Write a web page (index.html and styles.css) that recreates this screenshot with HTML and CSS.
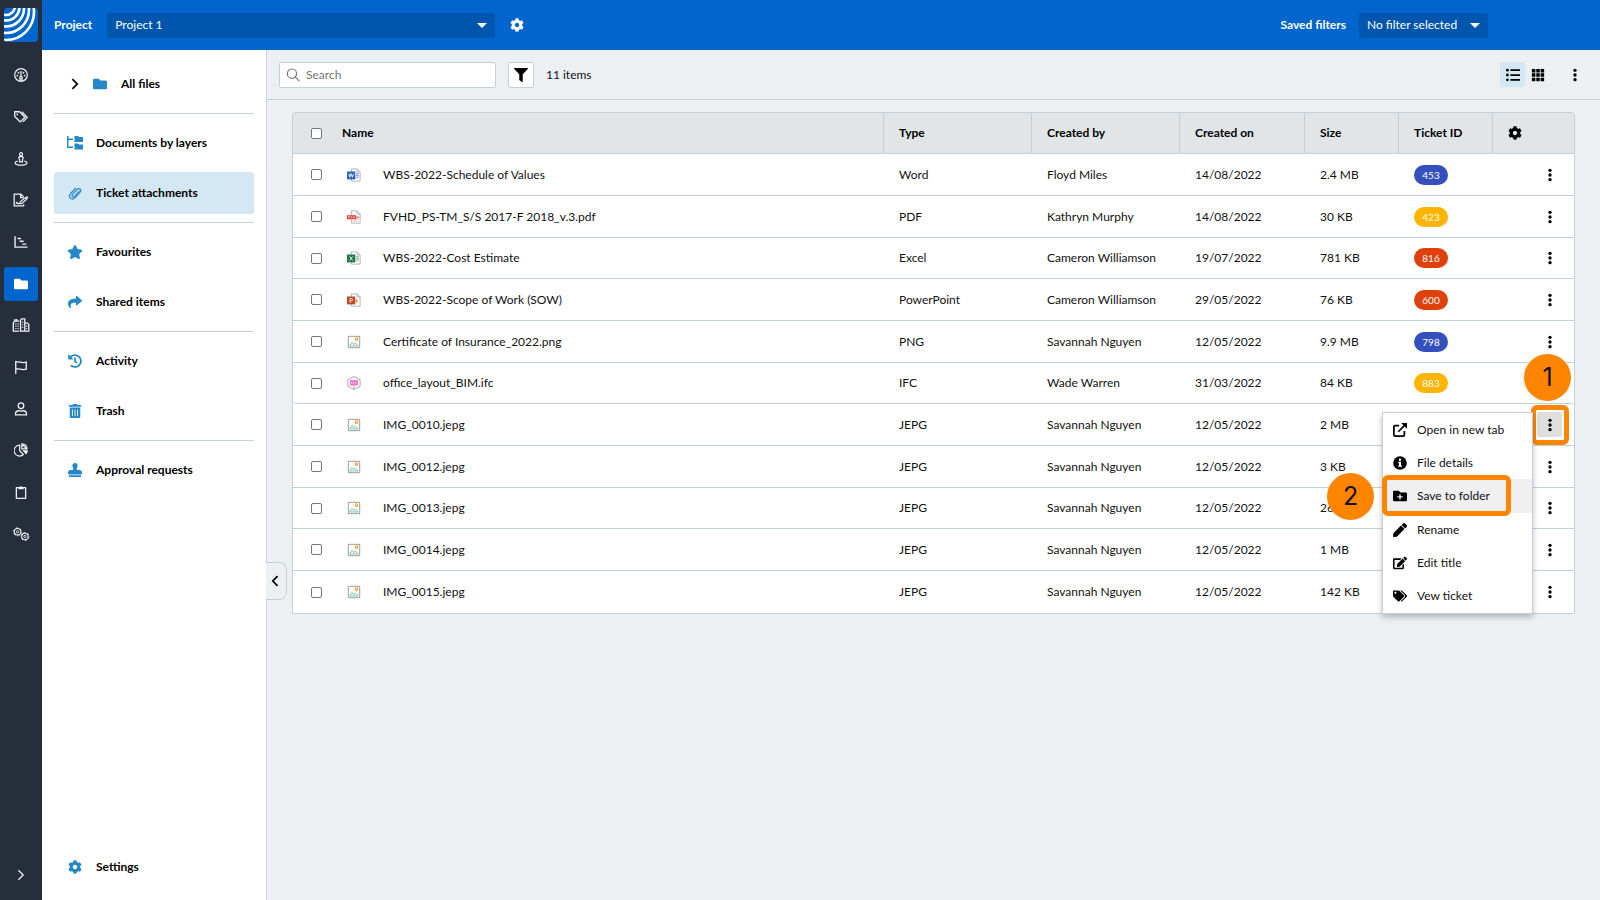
FILE: index.html
```html
<!DOCTYPE html>
<html lang="en">
<head>
    <meta charset="UTF-8">
    <meta name="viewport" content="width=device-width, initial-scale=1.0">
    <title>Ticket attachments</title>
    <link rel="stylesheet" href="styles.css">
</head>
<body>
    <svg class="sprite" aria-hidden="true">
        <symbol id="i-folder" viewBox="0 0 512 512"><path d="M464 128H272l-64-64H48C21.490 64 0 85.490 0 112v288c0 26.510 21.490 48 48 48h416c26.510 0 48-21.490 48-48V176c0-26.510-21.490-48-48-48z"/></symbol>
        <symbol id="i-folder-plus" viewBox="0 0 512 512"><path d="M464,128H272L208,64H48A48,48,0,0,0,0,112V400a48,48,0,0,0,48,48H464a48,48,0,0,0,48-48V176A48,48,0,0,0,464,128ZM359.5,296a16,16,0,0,1-16,16h-64v64a16,16,0,0,1-16,16h-16a16,16,0,0,1-16-16V312h-64a16,16,0,0,1-16-16V280a16,16,0,0,1,16-16h64V200a16,16,0,0,1,16-16h16a16,16,0,0,1,16,16v64h64a16,16,0,0,1,16,16Z"/></symbol>
        <symbol id="i-star" viewBox="0 0 576 512"><path d="M259.3 17.8L194 150.2 47.9 171.5c-26.2 3.8-36.7 36.1-17.7 54.6l105.7 103-25 145.5c-4.5 26.3 23.2 46 46.4 33.7L288 439.6l130.7 68.7c23.2 12.2 50.9-7.4 46.4-33.7l-25-145.5 105.7-103c19-18.5 8.5-50.8-17.700-54.6L382 150.2 316.700 17.8c-11.7-23.6-45.6-23.9-57.4 0z"/></symbol>
        <symbol id="i-share" viewBox="0 0 512 512"><path d="M503.691 189.836L327.687 37.851C312.281 24.546 288 35.347 288 56.015v80.053C127.371 137.907 0 170.1 0 322.326c0 61.441 39.581 122.309 83.333 154.132 13.653 9.931 33.111-2.533 28.077-18.631C66.066 312.814 132.917 274.316 288 272.085V360c0 20.7 24.3 31.453 39.687 18.164l176.004-152c11.071-9.562 11.086-26.753 0-36.328z"/></symbol>
        <symbol id="i-history" viewBox="0 0 512 512"><path d="M504 255.531c.253 136.64-111.18 248.372-247.82 248.468-59.015.042-113.223-20.53-155.822-54.911-11.077-8.94-11.905-25.541-1.839-35.607l11.267-11.267c8.609-8.609 22.353-9.551 31.891-1.984C173.062 425.135 212.781 440 256 440c101.705 0 184-82.311 184-184 0-101.705-82.311-184-184-184-48.814 0-93.149 18.969-126.068 49.932l50.754 50.754c10.08 10.08 2.941 27.314-11.313 27.314H24c-8.837 0-16-7.163-16-16V38.627c0-14.254 17.234-21.393 27.314-11.314l49.372 49.372C129.209 34.136 189.552 8 256 8c136.81 0 247.747 110.78 248 247.531zm-180.912 78.784l9.823-12.63c8.138-10.463 6.253-25.542-4.21-33.679L288 256.349V152c0-13.255-10.745-24-24-24h-16c-13.255 0-24 10.745-24 24v135.651l65.409 50.874c10.463 8.137 25.541 6.253 33.679-4.21z"/></symbol>
        <symbol id="i-trash" viewBox="0 0 448 512"><path d="M32 464a48 48 0 0 0 48 48h288a48 48 0 0 0 48-48V128H32zm272-256a16 16 0 0 1 32 0v224a16 16 0 0 1-32 0zm-96 0a16 16 0 0 1 32 0v224a16 16 0 0 1-32 0zm-96 0a16 16 0 0 1 32 0v224a16 16 0 0 1-32 0zM432 32H312l-9.400-18.700A24 24 0 0 0 281.100 0H166.800a23.720 23.720 0 0 0-21.400 13.300L136 32H16A16 16 0 0 0 0 48v32a16 16 0 0 0 16 16h416a16 16 0 0 0 16-16V48a16 16 0 0 0-16-16z"/></symbol>
        <symbol id="i-stamp" viewBox="0 0 512 512"><path d="M32 512h448v-64H32v64zm384-256h-66.560c-16.260 0-29.440-13.180-29.440-29.440v-9.460c0-27.370 8.880-53.410 21.460-77.720 9.110-17.610 12.900-38.390 9.050-60.420-6.770-38.780-38.470-70.700-77.260-77.450C212.620-9.040 160 37.330 160 96c0 14.160 3.120 27.540 8.690 39.580C182.020 164.430 192 194.700 192 226.490v.07c0 16.260-13.180 29.440-29.440 29.440H96c-53.020 0-96 42.980-96 96v32c0 17.670 14.330 32 32 32h448c17.670 0 32-14.330 32-32v-32c0-53.020-42.980-96-96-96z"/></symbol>
        <symbol id="i-cog" viewBox="0 0 512 512"><path d="M487.4 315.7l-42.6-24.6c4.3-23.2 4.3-47 0-70.2l42.6-24.6c4.9-2.8 7.1-8.6 5.5-14-11.1-35.6-30-67.8-54.7-94.6-3.8-4.1-10-5.1-14.8-2.3L380.8 110c-17.9-15.4-38.5-27.3-60.8-35.1V25.8c0-5.6-3.9-10.5-9.4-11.7-36.7-8.2-74.3-7.8-109.2 0-5.5 1.2-9.4 6.1-9.4 11.7V75c-22.2 7.9-42.8 19.8-60.8 35.1L88.7 85.5c-4.9-2.8-11-1.9-14.8 2.3-24.7 26.7-43.6 58.9-54.7 94.6-1.7 5.4.6 11.2 5.5 14L67.3 221c-4.3 23.2-4.3 47 0 70.2l-42.6 24.6c-4.9 2.8-7.1 8.6-5.5 14 11.1 35.6 30 67.8 54.7 94.6 3.8 4.1 10 5.1 14.8 2.3l42.6-24.6c17.9 15.4 38.5 27.3 60.8 35.1v49.2c0 5.6 3.9 10.5 9.4 11.7 36.7 8.2 74.3 7.8 109.2 0 5.5-1.2 9.4-6.1 9.4-11.7v-49.2c22.2-7.9 42.8-19.8 60.8-35.1l42.6 24.6c4.9 2.8 11 1.9 14.8-2.3 24.7-26.7 43.6-58.9 54.7-94.6 1.5-5.5-.7-11.3-5.6-14.1zM256 336c-44.1 0-80-35.9-80-80s35.9-80 80-80 80 35.9 80 80-35.9 80-80 80z"/></symbol>
        <symbol id="i-filter" viewBox="0 0 512 512"><path d="M487.976 0H24.028C2.71 0-8.047 25.866 7.058 40.971L192 225.941V432c0 7.831 3.821 15.17 10.237 19.662l80 55.98C298.02 518.69 320 507.493 320 487.98V225.941l184.947-184.97C520.021 25.896 509.338 0 487.976 0z"/></symbol>
        <symbol id="i-pencil" viewBox="0 0 512 512"><path d="M290.74 93.24l128.02 128.02-277.99 277.99-114.14 12.6C11.35 513.54-1.56 500.62.14 485.34l12.7-114.22 277.9-277.88zm207.2-19.06l-60.11-60.11c-18.75-18.75-49.16-18.75-67.91 0l-56.55 56.55 128.02 128.02 56.55-56.55c18.75-18.76 18.75-49.16 0-67.91z"/></symbol>
        <symbol id="i-edit" viewBox="0 0 576 512"><path d="M402.6 83.2l90.2 90.2c3.8 3.8 3.8 10 0 13.8L274.4 405.6l-92.8 10.3c-12.4 1.4-22.9-9.1-21.5-21.5l10.3-92.8L388.8 83.2c3.8-3.8 10-3.8 13.8 0zm162-22.9l-48.8-48.8c-15.2-15.2-39.9-15.2-55.2 0l-35.4 35.4c-3.8 3.8-3.8 10 0 13.8l90.2 90.2c3.8 3.8 10 3.8 13.8 0l35.4-35.4c15.2-15.3 15.2-40 0-55.2zM384 346.2V448H64V128h229.800c3.200 0 6.200-1.300 8.500-3.500l40-40c7.600-7.600 2.200-20.500-8.500-20.500H48C21.500 64 0 85.500 0 112v352c0 26.500 21.500 48 48 48h352c26.500 0 48-21.500 48-48V306.200c0-10.700-12.900-16-20.500-8.500l-40 40c-2.200 2.300-3.500 5.300-3.500 8.500z"/></symbol>
        <symbol id="i-tags" viewBox="0 0 640 512"><path d="M497.941 225.941L286.059 14.059A48 48 0 0 0 252.118 0H48C21.490 0 0 21.490 0 48v204.118a48 48 0 0 0 14.059 33.941l211.882 211.882c18.744 18.745 49.136 18.746 67.882 0l204.118-204.118c18.745-18.745 18.745-49.137 0-67.882zM112 160c-26.510 0-48-21.490-48-48s21.490-48 48-48 48 21.490 48 48-21.490 48-48 48zm513.941 133.823L421.823 497.941c-18.745 18.745-49.137 18.745-67.882 0l-.360-.360L527.640 323.522c16.999-16.999 26.360-39.600 26.360-63.640s-9.362-46.641-26.360-63.640L331.397 0h48.721a48 48 0 0 1 33.941 14.059l211.882 211.882c18.745 18.745 18.745 49.137 0 67.882z"/></symbol>
        <symbol id="i-info" viewBox="0 0 16 16"><circle cx="8" cy="8" r="7.800"/><g fill="#fff"><circle cx="8" cy="4.300" r="1.400"/><path d="M6 6.700h3.200v4.100h1v1.500H5.900v-1.500h1V8.200H6z"/></g></symbol>
        <symbol id="i-external" viewBox="0 0 16 16"><g fill="none" stroke="currentColor" stroke-width="2"><path d="M7 3H2.500Q1 3 1 4.500v9Q1 15 2.500 15h9q1.500 0 1.500-1.500V9"/><path d="M6 10l7.500-7.500"/></g><path d="M9.300 0H16v6.700z"/></symbol>
        <symbol id="i-list" viewBox="0 0 16 16"><circle cx="1.600" cy="2.500" r="1.600"/><circle cx="1.600" cy="8" r="1.600"/><circle cx="1.600" cy="13.500" r="1.600"/><path d="M5 1.500h11v2H5zM5 7h11v2H5zM5 12.500h11v2H5z"/></symbol>
        <symbol id="i-grid" viewBox="0 0 16 16"><path d="M1 1h4v4H1zM6 1h4v4H6zM11 1h4v4h-4zM1 6h4v4H1zM6 6h4v4H6zM11 6h4v4h-4zM1 11h4v4H1zM6 11h4v4H6zM11 11h4v4h-4z"/></symbol>
        <symbol id="i-dots" viewBox="0 0 16 16"><circle cx="8" cy="2.700" r="1.900"/><circle cx="8" cy="8" r="1.900"/><circle cx="8" cy="13.300" r="1.900"/></symbol>
        <symbol id="i-tree" viewBox="0 0 16 14"><path d="M0 0h1.500v2.500H6V4H1.500v6.500H6V12H0z"/><path d="M7.500 0H11l1 1h4v5H7.500zM7.500 7.500H11l1 1h4v5H7.500z"/></symbol>
        <symbol id="i-clip" viewBox="0 0 16 16"><path d="M12.600 6.200l-5.200 5.600c-1.600 1.600-3.800-.5-2.300-2.200l5.300-5.600c2.500-2.400 5.600.6 3.300 3.300l-5.800 6.200c-3.600 3.500-8.400-.9-5-4.900L8.700 2.500" fill="none" stroke="currentColor" stroke-width="1.400" stroke-linecap="round"/></symbol>
        <symbol id="i-search" viewBox="0 0 16 16"><g fill="none" stroke="currentColor" stroke-width="1.300" stroke-linecap="round"><circle cx="6.800" cy="6.500" r="5.300"/><path d="M10.700 10.400l4.300 4.300"/></g></symbol>
        <symbol id="i-right" viewBox="0 0 16 16"><path d="M5 2.500L10.500 8 5 13.500" fill="none" stroke="currentColor" stroke-width="2"/></symbol>
        <symbol id="i-left" viewBox="0 0 16 16"><path d="M11 2.500L5.500 8l5.500 5.500" fill="none" stroke="currentColor" stroke-width="2"/></symbol>

        <symbol id="n-gauge" viewBox="0 0 16 16"><g fill="none" stroke="currentColor" stroke-width="1.400"><circle cx="8" cy="8" r="7.200"/><circle cx="8" cy="11" r="1.500"/><path d="M8 3.500v6M5.500 13.800h5"/></g><circle cx="3.800" cy="8.700" r="1"/><circle cx="5.200" cy="5.300" r="1"/><circle cx="10.800" cy="5.300" r="1"/><circle cx="12.200" cy="8.700" r="1"/></symbol>
        <symbol id="n-tags" viewBox="0 0 16 16"><path d="M.8 2h5.700l6 6.200-5.200 5.400L.8 7.500zM9 2l6.200 6.400-4.900 5.200" fill="none" stroke="currentColor" stroke-width="1.500" stroke-linejoin="round"/><circle cx="3.700" cy="5" r="1"/></symbol>
        <symbol id="n-pin" viewBox="0 0 16 16"><g fill="none" stroke="currentColor" stroke-width="1.400"><circle cx="8" cy="2.500" r="1.700"/><path d="M6.300 5.200h3.400l.9 1.300-.9 2.200v2.500H6.300V8.700l-.9-2.200zM4.300 10.300C-1 11.800 1 14.900 8 14.900s9-3.100 3.700-4.600"/></g></symbol>
        <symbol id="n-sign" viewBox="0 0 18 16"><path d="M12 4.500L9 1.200H1.200v13.600H12v-2M8.500 1.500v3.800H12M3 12.200l1.400-1.500 1 1.500h2.400l.5-2.200 5.800-4.700 1.400 1.700-5.500 4.900-2.400.3" fill="none" stroke="currentColor" stroke-width="1.400"/><path d="M14.500 4.600l1.400-1.200 1.700 1.900-1.500 1.300z"/></symbol>
        <symbol id="n-gantt" viewBox="0 0 16 16"><path d="M1.200 1.500v12.300H15.500M4 4h4M6.500 7.200h4.500M9.500 10.400h4.500" fill="none" stroke="currentColor" stroke-width="1.600"/></symbol>
        <symbol id="n-city" viewBox="0 0 20 16"><path d="M8 15H1.200V5.500L3 3V1.200M5 3V1.200M1.800 3.600h6.400M9.500 15V2.200l1.200-1.300h3.600v5h3.300l1.300 1.500V15zM14.300 6v9" fill="none" stroke="currentColor" stroke-width="1.500"/><path d="M3.500 6h1.300v1.300H3.500zM6 6h1.300v1.300H6zM3.500 8.700h1.300V10H3.500zM6 8.700h1.300V10H6zM3.500 11.400h1.300v1.300H3.500zM6 11.400h1.300v1.300H6zM11.300 4h1.300v1.300h-1.300zM11.300 7h1.300v1.300h-1.300zM11.300 10h1.300v1.300h-1.300zM15.800 8.700h1.300V10h-1.300zM15.800 11.400h1.300v1.300h-1.300z"/></symbol>
        <symbol id="n-flag" viewBox="0 0 16 16"><path d="M2 1v15M2 2.500c4-1.700 6 1.800 12 0v8c-6 1.800-8-1.700-12 0" fill="none" stroke="currentColor" stroke-width="1.500"/></symbol>
        <symbol id="n-user" viewBox="0 0 16 16"><g fill="none" stroke="currentColor" stroke-width="1.500"><circle cx="8" cy="4.300" r="3.200"/><path d="M1.700 14.800v-1c0-2.300 1.800-3.800 4-3.800.8 0 1.200.4 2.300.4s1.500-.4 2.300-.4c2.200 0 4 1.500 4 3.800v1z"/></g></symbol>
        <symbol id="n-pie" viewBox="0 0 16 16"><g fill="none" stroke="currentColor" stroke-width="1.400"><path d="M6.500 2.500a6.200 6.200 0 1 0 4.200 10.600L6.500 8.900z"/><path d="M9 1v5.600h5.800C14.700 3.500 12.200 1.200 9 1zM9.200 1.500l5 5"/></g><path d="M9.300 8.400H16c-.2 2-1 3.400-2 4.600z"/></symbol>
        <symbol id="n-clipboard" viewBox="0 0 16 16"><path d="M2.700 3h10.600v12.200H2.700z" fill="none" stroke="currentColor" stroke-width="1.500" stroke-linejoin="round"/><path d="M5 2.400h1.500a1.600 1.600 0 0 1 3 0H11v2.400H5z"/></symbol>
        <symbol id="n-cogs" viewBox="0 0 20 16"><g fill="none" stroke="currentColor"><circle cx="6" cy="5.500" r="3.700" stroke-width="1.200"/><circle cx="6" cy="5.500" r="4.500" stroke-width="1" stroke-dasharray="2.300 2.400"/><circle cx="6" cy="5.500" r="1.300"/><circle cx="14.500" cy="10.800" r="3.700" stroke-width="1.200"/><circle cx="14.500" cy="10.800" r="4.500" stroke-width="1" stroke-dasharray="2.300 2.400"/><circle cx="14.500" cy="10.800" r="1.300"/></g></symbol>

        <symbol id="f-page" viewBox="0 0 16 16"><path d="M5 1h6.500L15 4.500V15H5zM11.500 1v3.500H15" fill="#fff" stroke="#a3a3a3" stroke-width=".9"/></symbol>
        <symbol id="f-word" viewBox="0 0 16 16"><use href="#f-page"/><path d="M10.500 6.500h3M10.500 8.500h3M10.500 10.500h3" stroke="#4a86d8"/><path d="M0 4h9.500v9H0z" fill="#2a63bd"/><path d="M2 6.500l1.200 4 1.500-4 1.500 4 1.300-4" fill="none" stroke="#fff"/></symbol>
        <symbol id="f-pdf" viewBox="0 0 16 16"><use href="#f-page"/><path d="M10.500 10.500h3M7 12.500h5" stroke="#e9a0a0"/><path d="M0 6h10.500v4.500H0z" fill="#e0322f"/><path d="M10.500 8.200h3.500" stroke="#e0322f"/><path d="M1.800 9.500V7.200h1.500v1H2M5 9.300V7.400c1.500 0 1.500 1.900 0 1.900zM7.700 9.500V7.300h1.500M7.700 8.400h1.300" fill="none" stroke="#fff" stroke-width=".6"/></symbol>
        <symbol id="f-excel" viewBox="0 0 16 16"><use href="#f-page"/><path d="M10.500 6.500h3M10.500 8.500h3M10.500 10.500h3" stroke="#58a877"/><path d="M0 4h9.500v9H0z" fill="#1f7a43"/><path d="M3 6.200l3.500 4.600M6.500 6.200L3 10.800" fill="none" stroke="#fff"/></symbol>
        <symbol id="f-ppt" viewBox="0 0 16 16"><use href="#f-page"/><path d="M10.500 6.500a2.800 2.800 0 0 1 0 5z" fill="#e0622f"/><path d="M0 4h9.500v9H0z" fill="#bb4a25"/><path d="M3.500 11V6.300h1.300c2 0 2 2.700 0 2.700H3.500" fill="none" stroke="#fff"/></symbol>
        <symbol id="f-image" viewBox="0 0 16 16"><path d="M1.500 1.500h13v13h-13z" fill="#fff" stroke="#8f8f8f"/><circle cx="10.800" cy="4.700" r="1.500" fill="none" stroke="#f39a1c" stroke-width="1.200"/><path d="M3 12.500l2.800-4 2 2.600 1.700-2 3.300 3.400z" fill="none" stroke="#6dbda0"/></symbol>
        <symbol id="f-ifc" viewBox="0 0 16 16"><path d="M8 .6l7 3.700v7.400l-7 3.700-7-3.700V4.300zM8 11.500V15" fill="#fff" stroke="#999"/><path d="M3.500 4.800h9v6h-9z" fill="#ef5fc8"/><path d="M5.300 6.500v2.800M7 9.300V6.500h1.300M7 8h1.200M11 6.700H9.700v2.400H11" fill="none" stroke="#fff" stroke-width=".7"/></symbol>
    </svg>

    <div class="app">
        <nav class="rail" aria-label="Modules">
            <a class="logo" href="#" aria-label="Home">
                <svg viewBox="0 0 34 34"><rect width="34" height="34" rx="3" fill="#0065cc"/><g fill="none" stroke="#fff" stroke-width="2.600"><circle cx="2" cy="-2" r="9"/><circle cx="2" cy="-1" r="13.500"/><circle cx="2" cy=".5" r="18"/><circle cx="2" cy="2" r="23"/><circle cx="2" cy="4" r="28"/></g></svg>
            </a>
            <ul class="rail-list">
                <li><a href="#" aria-label="Dashboard"><svg><use href="#n-gauge"/></svg></a></li>
                <li><a href="#" aria-label="Tickets"><svg><use href="#n-tags"/></svg></a></li>
                <li><a href="#" aria-label="Locations"><svg><use href="#n-pin"/></svg></a></li>
                <li><a href="#" aria-label="Forms"><svg class="wide"><use href="#n-sign"/></svg></a></li>
                <li><a href="#" aria-label="Schedule"><svg><use href="#n-gantt"/></svg></a></li>
                <li><a class="active" href="#" aria-label="Files"><svg><use href="#i-folder"/></svg></a></li>
                <li><a href="#" aria-label="Buildings"><svg class="wide"><use href="#n-city"/></svg></a></li>
                <li><a href="#" aria-label="Milestones"><svg><use href="#n-flag"/></svg></a></li>
                <li><a href="#" aria-label="Contacts"><svg><use href="#n-user"/></svg></a></li>
                <li><a href="#" aria-label="Reports"><svg><use href="#n-pie"/></svg></a></li>
                <li><a href="#" aria-label="Clipboard"><svg><use href="#n-clipboard"/></svg></a></li>
                <li><a href="#" aria-label="Configuration"><svg class="wide"><use href="#n-cogs"/></svg></a></li>
            </ul>
            <button class="rail-expand" type="button" aria-label="Expand"><svg viewBox="0 0 16 16"><path d="M5 2.500L10.500 8 5 13.500" fill="none" stroke="currentColor" stroke-width="1.500"/></svg></button>
        </nav>

        <div class="workspace">
            <header class="topbar">
                <label class="topbar-label" for="project">Project</label>
                <div class="picker picker-project">
                    <select id="project"><option>Project 1</option></select>
                </div>
                <button class="icon-btn" type="button" aria-label="Project settings"><svg><use href="#i-cog"/></svg></button>
                <label class="topbar-label push" for="saved">Saved filters</label>
                <div class="picker picker-saved">
                    <select id="saved"><option>No filter selected</option></select>
                </div>
            </header>

            <div class="body">
                <aside class="sidebar">
                    <a class="side-item root" href="#"><svg class="chevron"><use href="#i-right"/></svg><svg><use href="#i-folder"/></svg>All files</a>
                    <hr>
                    <a class="side-item" href="#"><svg class="large"><use href="#i-tree"/></svg>Documents by layers</a>
                    <a class="side-item selected" href="#"><svg><use href="#i-clip"/></svg>Ticket attachments</a>
                    <hr>
                    <a class="side-item" href="#"><svg class="large"><use href="#i-star"/></svg>Favourites</a>
                    <a class="side-item" href="#"><svg><use href="#i-share"/></svg>Shared items</a>
                    <hr>
                    <a class="side-item" href="#"><svg><use href="#i-history"/></svg>Activity</a>
                    <a class="side-item" href="#"><svg><use href="#i-trash"/></svg>Trash</a>
                    <hr>
                    <a class="side-item" href="#"><svg><use href="#i-stamp"/></svg>Approval requests</a>
                    <a class="side-item bottom" href="#"><svg><use href="#i-cog"/></svg>Settings</a>
                </aside>

                <main class="content">
                    <button class="collapse" type="button" aria-label="Collapse sidebar"><svg><use href="#i-left"/></svg></button>
                    <div class="toolbar">
                        <div class="search">
                            <svg><use href="#i-search"/></svg>
                            <input type="text" placeholder="Search" aria-label="Search">
                        </div>
                        <button class="filter-btn" type="button" aria-label="Filter"><svg><use href="#i-filter"/></svg></button>
                        <span>11 items</span>
                        <div class="view-tools">
                            <button class="icon-btn active" type="button" aria-label="List view"><svg><use href="#i-list"/></svg></button>
                            <button class="icon-btn" type="button" aria-label="Grid view"><svg><use href="#i-grid"/></svg></button>
                            <button class="icon-btn more" type="button" aria-label="More"><svg><use href="#i-dots"/></svg></button>
                        </div>
                    </div>

                    <div class="table-wrap">
                        <table class="files">
                            <colgroup>
                                <col class="c-check"><col class="c-icon"><col><col class="c-type"><col class="c-by"><col class="c-on"><col class="c-size"><col class="c-ticket"><col class="c-menu">
                            </colgroup>
                            <thead>
                                <tr>
                                    <th class="check"><input type="checkbox" aria-label="Select all"></th>
                                    <th class="name-head" colspan="2">Name</th>
                                    <th>Type</th>
                                    <th>Created by</th>
                                    <th>Created on</th>
                                    <th>Size</th>
                                    <th>Ticket ID</th>
                                    <th><button class="columns-btn" type="button" aria-label="Columns"><svg><use href="#i-cog"/></svg></button></th>
                                </tr>
                            </thead>
                            <tbody>
                                <tr>
                                    <td class="check"><input type="checkbox" aria-label="Select WBS-2022-Schedule of Values"></td>
                                    <td class="icon"><svg><use href="#f-word"/></svg></td>
                                    <td class="name">WBS-2022-Schedule of Values</td>
                                    <td>Word</td><td>Floyd Miles</td><td>14/08/2022</td><td>2.4 MB</td>
                                    <td><span class="badge blue">453</span></td>
                                    <td class="menu-cell"><button class="icon-btn" type="button" aria-label="Actions"><svg><use href="#i-dots"/></svg></button></td>
                                </tr>
                                <tr>
                                    <td class="check"><input type="checkbox" aria-label="Select FVHD_PS-TM_S/S 2017-F 2018_v.3.pdf"></td>
                                    <td class="icon"><svg><use href="#f-pdf"/></svg></td>
                                    <td class="name">FVHD_PS-TM_S/S 2017-F 2018_v.3.pdf</td>
                                    <td>PDF</td><td>Kathryn Murphy</td><td>14/08/2022</td><td>30 KB</td>
                                    <td><span class="badge yellow">423</span></td>
                                    <td class="menu-cell"><button class="icon-btn" type="button" aria-label="Actions"><svg><use href="#i-dots"/></svg></button></td>
                                </tr>
                                <tr>
                                    <td class="check"><input type="checkbox" aria-label="Select WBS-2022-Cost Estimate"></td>
                                    <td class="icon"><svg><use href="#f-excel"/></svg></td>
                                    <td class="name">WBS-2022-Cost Estimate</td>
                                    <td>Excel</td><td>Cameron Williamson</td><td>19/07/2022</td><td>781 KB</td>
                                    <td><span class="badge red">816</span></td>
                                    <td class="menu-cell"><button class="icon-btn" type="button" aria-label="Actions"><svg><use href="#i-dots"/></svg></button></td>
                                </tr>
                                <tr>
                                    <td class="check"><input type="checkbox" aria-label="Select WBS-2022-Scope of Work (SOW)"></td>
                                    <td class="icon"><svg><use href="#f-ppt"/></svg></td>
                                    <td class="name">WBS-2022-Scope of Work (SOW)</td>
                                    <td>PowerPoint</td><td>Cameron Williamson</td><td>29/05/2022</td><td>76 KB</td>
                                    <td><span class="badge red">600</span></td>
                                    <td class="menu-cell"><button class="icon-btn" type="button" aria-label="Actions"><svg><use href="#i-dots"/></svg></button></td>
                                </tr>
                                <tr>
                                    <td class="check"><input type="checkbox" aria-label="Select Certificate of Insurance_2022.png"></td>
                                    <td class="icon"><svg><use href="#f-image"/></svg></td>
                                    <td class="name">Certificate of Insurance_2022.png</td>
                                    <td>PNG</td><td>Savannah Nguyen</td><td>12/05/2022</td><td>9.9 MB</td>
                                    <td><span class="badge blue">798</span></td>
                                    <td class="menu-cell"><button class="icon-btn" type="button" aria-label="Actions"><svg><use href="#i-dots"/></svg></button></td>
                                </tr>
                                <tr>
                                    <td class="check"><input type="checkbox" aria-label="Select office_layout_BIM.ifc"></td>
                                    <td class="icon"><svg><use href="#f-ifc"/></svg></td>
                                    <td class="name">office_layout_BIM.ifc</td>
                                    <td>IFC</td><td>Wade Warren</td><td>31/03/2022</td><td>84 KB</td>
                                    <td><span class="badge yellow">883</span></td>
                                    <td class="menu-cell"><button class="icon-btn" type="button" aria-label="Actions"><svg><use href="#i-dots"/></svg></button></td>
                                </tr>
                                <tr>
                                    <td class="check"><input type="checkbox" aria-label="Select IMG_0010.jepg"></td>
                                    <td class="icon"><svg><use href="#f-image"/></svg></td>
                                    <td class="name">IMG_0010.jepg</td>
                                    <td>JEPG</td><td>Savannah Nguyen</td><td>12/05/2022</td><td>2 MB</td>
                                    <td></td>
                                    <td class="menu-cell">
                                        <div class="menu-anchor">
                                            <button class="icon-btn open" type="button" aria-label="Actions" aria-expanded="true"><svg><use href="#i-dots"/></svg></button>
                                            <span class="ring ring-button"></span>
                                            <span class="step step-one">1</span>
                                            <div class="menu">
                                                <button type="button"><svg><use href="#i-external"/></svg>Open in new tab</button>
                                                <button type="button"><svg><use href="#i-info"/></svg>File details</button>
                                                <button class="hovered" type="button"><svg><use href="#i-folder-plus"/></svg>Save to folder</button>
                                                <button type="button"><svg><use href="#i-pencil"/></svg>Rename</button>
                                                <button type="button"><svg><use href="#i-edit"/></svg>Edit title</button>
                                                <button type="button"><svg><use href="#i-tags"/></svg>Vew ticket</button>
                                                <span class="ring ring-item"></span>
                                                <span class="step step-two">2</span>
                                            </div>
                                        </div>
                                    </td>
                                </tr>
                                <tr>
                                    <td class="check"><input type="checkbox" aria-label="Select IMG_0012.jepg"></td>
                                    <td class="icon"><svg><use href="#f-image"/></svg></td>
                                    <td class="name">IMG_0012.jepg</td>
                                    <td>JEPG</td><td>Savannah Nguyen</td><td>12/05/2022</td><td>3 KB</td>
                                    <td></td>
                                    <td class="menu-cell"><button class="icon-btn" type="button" aria-label="Actions"><svg><use href="#i-dots"/></svg></button></td>
                                </tr>
                                <tr>
                                    <td class="check"><input type="checkbox" aria-label="Select IMG_0013.jepg"></td>
                                    <td class="icon"><svg><use href="#f-image"/></svg></td>
                                    <td class="name">IMG_0013.jepg</td>
                                    <td>JEPG</td><td>Savannah Nguyen</td><td>12/05/2022</td><td>26 KB</td>
                                    <td></td>
                                    <td class="menu-cell"><button class="icon-btn" type="button" aria-label="Actions"><svg><use href="#i-dots"/></svg></button></td>
                                </tr>
                                <tr>
                                    <td class="check"><input type="checkbox" aria-label="Select IMG_0014.jepg"></td>
                                    <td class="icon"><svg><use href="#f-image"/></svg></td>
                                    <td class="name">IMG_0014.jepg</td>
                                    <td>JEPG</td><td>Savannah Nguyen</td><td>12/05/2022</td><td>1 MB</td>
                                    <td></td>
                                    <td class="menu-cell"><button class="icon-btn" type="button" aria-label="Actions"><svg><use href="#i-dots"/></svg></button></td>
                                </tr>
                                <tr>
                                    <td class="check"><input type="checkbox" aria-label="Select IMG_0015.jepg"></td>
                                    <td class="icon"><svg><use href="#f-image"/></svg></td>
                                    <td class="name">IMG_0015.jepg</td>
                                    <td>JEPG</td><td>Savannah Nguyen</td><td>12/05/2022</td><td>142 KB</td>
                                    <td></td>
                                    <td class="menu-cell"><button class="icon-btn" type="button" aria-label="Actions"><svg><use href="#i-dots"/></svg></button></td>
                                </tr>
                            </tbody>
                        </table>
                    </div>
                </main>
            </div>
        </div>
    </div>
</body>
</html>
```

FILE: styles.css
```css
* {
    box-sizing: border-box;
}
body {
    margin: 0;
    font-family: Lato, "Liberation Sans", sans-serif;
    font-size: 12px;
    line-height: 16px;
    color: #111;
    background-color: #ecf0f3;
}
svg {
    display: block;
    width: 14px;
    height: 14px;
    fill: currentColor;
    flex: none;
}
.sprite {
    position: absolute;
    width: 0;
    height: 0;
}
a {
    color: inherit;
    text-decoration: none;
}
button {
    display: flex;
    align-items: center;
    justify-content: center;
    padding: 0;
    border: none;
    background: none;
    color: inherit;
    font: inherit;
    cursor: pointer;
}
.app {
    display: flex;
    min-height: 100vh;
}

/* left icon rail */
.rail {
    display: flex;
    flex-direction: column;
    align-items: center;
    width: 42px;
    flex: none;
    padding: 8px 0;
    background-color: #262e3b;
    color: #eef1f4;
}
.logo svg {
    width: 34px;
    height: 34px;
    border-radius: 3px;
}
.rail-list {
    margin: 16px 0 0;
    padding: 0;
    list-style: none;
}
.rail-list li {
    height: 42px;
}
.rail-list li:nth-child(3n) {
    height: 41px;
}
.rail-list a {
    display: flex;
    align-items: center;
    justify-content: center;
    width: 34px;
    height: 34px;
    border-radius: 3px;
}
.rail-list a.active {
    background-color: #0065cc;
    color: #fff;
}
.rail-list .wide {
    width: 18px;
}
.rail-expand {
    width: 34px;
    height: 34px;
    margin-top: auto;
}

/* top bar */
.workspace {
    display: flex;
    flex-direction: column;
    flex: 1;
    min-width: 0;
}
.topbar {
    display: flex;
    align-items: center;
    height: 50px;
    padding: 0 112px 0 12px;
    background-color: #0065cc;
    color: #fff;
}
.topbar-label {
    font-weight: bold;
    margin-right: 15px;
}
.push {
    margin-left: auto;
    margin-right: 13px;
}
.picker {
    position: relative;
}
.picker::after {
    content: "";
    position: absolute;
    right: 8px;
    top: 10px;
    border: 5px solid transparent;
    border-top-color: #fff;
    border-bottom: none;
    pointer-events: none;
}
.picker select {
    width: 100%;
    height: 25px;
    padding: 0 8px;
    border: none;
    border-radius: 2px;
    background-color: #0056ac;
    color: #fff;
    font: inherit;
    appearance: none;
}
.picker-project {
    width: 388px;
    margin-right: 9px;
}
.picker-saved {
    width: 129px;
}
.icon-btn {
    width: 25px;
    height: 25px;
    border-radius: 2px;
}

/* folders panel */
.body {
    display: flex;
    flex: 1;
}
.sidebar {
    display: flex;
    flex-direction: column;
    gap: 8px;
    width: 225px;
    flex: none;
    padding: 13px 12px 12px;
    border-right: 1px solid #c3d0dc;
    background-color: #fff;
}
.sidebar hr {
    width: 100%;
    margin: 0;
    border: none;
    border-top: 1px solid #c3d0dc;
}
.side-item {
    display: flex;
    align-items: center;
    gap: 14px;
    height: 42px;
    padding-left: 14px;
    border-radius: 3px;
    color: #000;
    font-weight: bold;
}
.side-item svg {
    color: #2488c8;
}
.side-item svg.large {
    width: 16px;
    margin: 0 -1px;
}
.side-item svg.chevron {
    color: #000;
    margin-right: -3px;
}
.side-item.selected {
    background-color: #d3e7f4;
}
.side-item.bottom {
    margin-top: auto;
}

/* toolbar */
.content {
    position: relative;
    flex: 1;
    min-width: 0;
}
.toolbar {
    display: flex;
    align-items: center;
    gap: 12px;
    height: 50px;
    padding: 0 13px 0 12px;
    border-bottom: 1px solid #c3d0dc;
}
.search {
    display: flex;
    align-items: center;
    gap: 6px;
    width: 217px;
    height: 26px;
    padding: 0 6px;
    border: 1px solid #c3d0dc;
    border-radius: 2px;
    background-color: #fff;
    color: #757575;
}
.search input {
    flex: 1;
    min-width: 0;
    padding: 0;
    border: none;
    outline: none;
    background: none;
    font: inherit;
}
.search input::placeholder {
    color: #757575;
}
.filter-btn {
    width: 26px;
    height: 26px;
    border: 1px solid #c3d0dc;
    border-radius: 2px;
    background-color: #fff;
    color: #000;
}
.view-tools {
    display: flex;
    margin-left: auto;
    color: #000;
}
.view-tools .active {
    background-color: #d3e7f4;
}
.view-tools .more {
    margin-left: 12px;
}
.icon-btn svg {
    width: 14px;
    height: 14px;
}
.collapse {
    position: absolute;
    left: -1px;
    top: 512px;
    width: 21px;
    height: 38px;
    padding-right: 3px;
    border: 1px solid #c3d0dc;
    border-left: none;
    border-radius: 0 8px 8px 0;
    background-color: #ecf0f3;
    color: #000;
}

/* files table */
.table-wrap {
    padding: 12px 25px 24px;
}
.files {
    width: 100%;
    table-layout: fixed;
    border: 1px solid #c3d0dc;
    border-radius: 3px 3px 0 0;
    border-collapse: separate;
    border-spacing: 0;
    background-color: #fff;
}
.c-check { width: 49px; }
.c-icon { width: 25px; }
.c-type { width: 148px; }
.c-by { width: 148px; }
.c-on { width: 125px; }
.c-size { width: 94px; }
.c-ticket { width: 94px; }
.c-menu { width: 82px; }
.files th,
.files td {
    padding: 0 16px;
    border-bottom: 1px solid #c3d0dc;
    text-align: left;
    white-space: nowrap;
}
.files th {
    height: 41px;
    padding-left: 15px;
    border-left: 1px solid #c3d0dc;
    background-color: #e1e5e7;
    color: #000;
    font-weight: bold;
}
.files td {
    height: 42px;
}
.files tr:nth-child(3n) td {
    height: 41px;
}
.files tbody tr:last-child td {
    border-bottom: none;
}
.files tbody tr:nth-child(6) td:first-child {
    border-bottom-left-radius: 3px;
}
.files tbody tr:nth-child(6) td:last-child {
    border-bottom-right-radius: 3px;
}
.files .check {
    padding: 0 0 0 18px;
    border-left: none;
}
.files .check input {
    display: block;
    width: 11px;
    height: 11px;
    margin: 0;
    border: 1px solid #767676;
    border-radius: 2px;
    background-color: #fff;
    appearance: none;
}
.files .name-head {
    padding: 0;
    border-left: none;
}
.files .icon {
    padding: 0 0 0 5px;
}
.files .menu-cell {
    padding: 0 12px 0 0;
}
.menu-cell .icon-btn {
    margin-left: auto;
    color: #000;
}
.columns-btn svg {
    width: 14px;
    height: 14px;
}
.badge {
    display: block;
    width: 34px;
    height: 20px;
    border-radius: 10px;
    color: #fff;
    font-size: 10px;
    line-height: 20px;
    text-align: center;
}
.blue { background-color: #3450bd; }
.yellow { background-color: #ffb400; }
.red { background-color: #df410c; }

/* row menu */
.menu-anchor {
    position: relative;
    width: 25px;
    margin-left: auto;
}
.icon-btn.open {
    background-color: #dedede;
}
.menu {
    position: absolute;
    top: 0;
    right: 29px;
    z-index: 1;
    width: 151px;
    border: 1px solid #c3d0dc;
    background-color: #fff;
    box-shadow: 0 3px 6px rgba(0, 0, 0, 0.25);
}
.menu button {
    justify-content: flex-start;
    gap: 10px;
    width: 100%;
    height: 33px;
    padding-left: 10px;
    color: #111;
}
.menu button:nth-child(3n) {
    height: 34px;
}
.menu button svg {
    color: #000;
}
.menu .hovered {
    background-color: #f0f0f0;
}

/* numbered callouts */
.ring {
    position: absolute;
    border: 5px solid #ff8400;
    border-radius: 6px;
}
.ring-button {
    top: -7px;
    left: -6px;
    width: 38px;
    height: 40px;
}
.ring-item {
    top: 62px;
    left: -1px;
    width: 129px;
    height: 41px;
}
.step {
    position: absolute;
    width: 47px;
    height: 47px;
    border-radius: 50%;
    background-color: #ff8400;
    color: #111;
    font-family: Inter, sans-serif;
    font-size: 25px;
    line-height: 47px;
    text-align: center;
}
.step-one {
    top: -58px;
    left: -13px;
}
.step-two {
    top: 60px;
    left: -56px;
}
```
